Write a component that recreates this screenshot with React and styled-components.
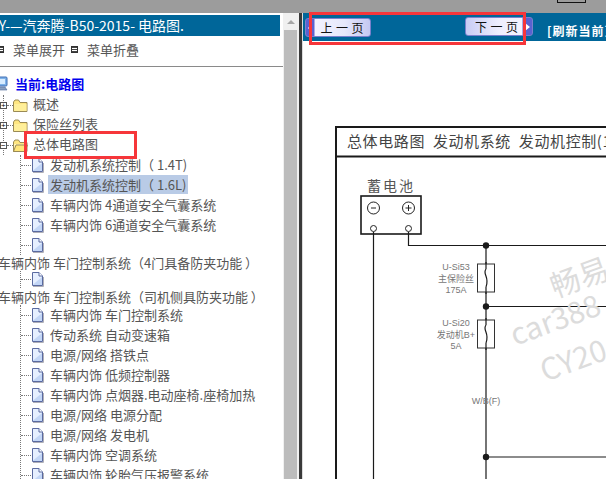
import styled, { createGlobalStyle } from 'styled-components';

const Global = createGlobalStyle`
  html, body { margin: 0; padding: 0; background: #fff; overflow: hidden; }
  body { font-family: "Noto Sans CJK SC", "Liberation Sans", sans-serif; }
`;

const Page = styled.div`
  width: 606px;
  height: 479px;
  display: flex;
  flex-direction: column;
  overflow: hidden;
  position: relative;
`;

const TopBar = styled.div`
  height: 13px;
  flex: none;
  background: #9c9c9c;
`;

const TopTab = styled.div`
  width: 27px;
  height: 2px;
  margin-left: 557px;
  background: #9c9c9c;
  border: solid #111;
  border-width: 0 1px 1px;
`;

const Frames = styled.div`
  flex: 1;
  display: flex;
  min-height: 0;
`;

const LeftPane = styled.div`
  width: 283px;
  flex: none;
  overflow: hidden;
  padding-top: 2px;
  background: #fff;
`;

const TitleBar = styled.div`
  width: 280px;
  height: 21px;
  background: #006699;
  color: #fff;
  font-size: 14px;
  line-height: 21px;
  white-space: nowrap;
  overflow: hidden;
  text-indent: -10px;
`;

const MenuRow = styled.div`
  height: 26px;
  padding-bottom: 4px;
  display: flex;
  align-items: center;
  margin-left: -3px;
  border-bottom: 1px solid #8a8a8a;
  font-size: 13px;
  color: #555;
`;

const MenuIcon = styled.span`
  width: 5px;
  height: 5px;
  border: 1px solid #333;
  margin-right: 9px;
  margin-left: ${p => p.$gap || 0}px;
  background: repeating-linear-gradient(#444 0 1px, #fff 1px 2px);
`;

const MenuLabel = styled.span`
  width: 53px;
  white-space: nowrap;
`;

const RootRow = styled.div`
  height: 20px;
  margin-top: 6px;
  margin-bottom: 2px;
  display: flex;
  align-items: center;
  margin-left: -7px;
  gap: 7px;
  color: #0000ee;
  font-size: 13px;
  font-weight: 700;
`;

const FolderList = styled.div`
  margin-left: 3px;
  border-left: 1px dotted #777;
`;

const FolderRow = styled.div`
  height: 20px;
  display: flex;
  align-items: center;
  font-size: 13px;
  color: #555;
  white-space: nowrap;
`;

const Toggle = styled.span`
  width: 5px;
  height: 5px;
  margin-left: -4px;
  flex: none;
  border: 1px solid #555;
  background: #fff;
  font: 8px/5px "Liberation Mono", monospace;
  color: #000;
  text-align: center;
`;

const Connector = styled.span`
  width: ${p => p.$w}px;
  flex: none;
  border-top: 1px dotted #777;
`;

const Leaves = styled.div`
  margin-left: 20px;
  border-left: 1px dotted #777;
`;

const Leaf = styled.div`
  height: ${p => p.$h || 20}px;
  display: flex;
  align-items: center;
  font-size: 13px;
  color: #555;
  white-space: nowrap;
`;

const FolderLabel = styled.span`
  margin-left: 5px;
  line-height: 18px;
  padding-bottom: 2px;
`;

const LeafLabel = styled.span`
  margin-left: 4px;
  margin-bottom: 1px;
  padding: 0 2px;
  line-height: 19px;
  background: ${p => (p.$selected ? '#b9cbe6' : 'transparent')};
`;

const Wrapped = styled.div`
  height: ${p => p.$h}px;
  padding-top: ${p => p.$pad || 0}px;
  line-height: ${p => p.$h}px;
  margin-left: -2px;
  font-size: 13px;
  color: #555;
  white-space: nowrap;
`;

const ScrollBar = styled.div`
  width: 16px;
  flex: none;
  display: flex;
  flex-direction: column;
  align-items: center;
  background: #f0f0f0;
`;

const ScrollArrow = styled.span`
  margin-top: 7px;
  width: 0;
  height: 0;
  border: 4px solid transparent;
  border-top: 0;
  border-bottom: 4px solid #a6a6a6;
`;

const ScrollThumb = styled.div`
  flex: 1;
  width: 13px;
  margin-top: 6px;
  margin-right: 1px;
  background: #bcbcbc;
`;

const Splitter = styled.div`
  width: 4px;
  flex: none;
  background: linear-gradient(90deg, #3a3a3a 0 3px, #dcdcdc 3px);
`;

const RightPane = styled.div`
  flex: 1;
  min-width: 0;
  display: flex;
  flex-direction: column;
  overflow: hidden;
`;

const Toolbar = styled.div`
  height: 28px;
  flex: none;
  display: flex;
  background: #006699;
  padding-left: 2px;
  white-space: nowrap;
`;

const PageButton = styled.div`
  height: 19px;
  width: ${p => p.$w}px;
  margin-top: ${p => p.$top}px;
  margin-left: ${p => p.$left || 0}px;
  flex: none;
  box-sizing: border-box;
  display: flex;
  align-items: center;
  justify-content: ${p => (p.$right ? 'flex-start' : 'flex-end')};
  padding: 0 ${p => (p.$right ? 0 : 3)}px 0 ${p => (p.$right ? 9 : 0)}px;
  border: 1px solid #7a80cc;
  border-radius: 3px;
  background: linear-gradient(90deg, #5a62d0 0 8px, #f3f3ff 9px, #e6e8fb 60%, #c4c8f2);
  ${p => p.$right && 'background: linear-gradient(90deg, #c8ccf4, #eeeefe 50%, #f3f3ff 56px, #5a62d0 57px);'}
  font: 12px/1 "Noto Sans CJK SC", sans-serif;
  letter-spacing: 3.5px;
  color: #111;
  position: relative;
`;

const ButtonArrow = styled.span`
  width: 0;
  height: 0;
  position: absolute;
  top: 5px;
  ${p => (p.$right ? 'right: 2px;' : 'left: 2px;')}
  border: 4px solid transparent;
  ${p => (p.$right ? 'border-right: 0; border-left: 5px solid #fff;' : 'border-left: 0; border-right: 4px solid #fff;')}
`;

const RefreshLink = styled.span`
  margin-left: 14px;
  margin-top: 9px;
  color: #fff;
  font-size: 12px;
  font-weight: 700;
  letter-spacing: 1px;
  line-height: 18px;
`;

const Sheet = styled.svg`
  display: block;
  flex: 1;
  min-height: 0;
  background: #fff;
`;

const Callout = styled.div`
  position: absolute;
  box-sizing: border-box;
  left: ${p => p.$x}px;
  top: ${p => p.$y}px;
  width: ${p => p.$w}px;
  height: ${p => p.$h}px;
  border: 3px solid #f6363a;
`;

const Computer = () => (
  <svg width="15" height="15" viewBox="0 0 15 15">
    <rect x="1" y="1" width="13" height="9" rx="1" fill="#7fb2e8" stroke="#3f6fb5" />
    <rect x="3" y="3" width="9" height="5" fill="#d7ecff" />
    <path d="M3 11h9l2 3H1z" fill="#8aa0bf" stroke="#4d6a99" strokeWidth=".6" />
  </svg>
);

const Folder = ({ open }) => (
  <svg width="15" height="13" viewBox="0 0 15 13" style={{ flex: 'none' }}>
    <path d="M.5 3V12.5H14V3.5H7L5.5 1H2Z" fill="#ffe680" stroke="#9a8a55" />
    <path d="M1 5h12.5v7H1z" fill={open ? '#fff6b8' : '#ffef9a'} />
    {open && <path d="M.5 12.5L3 6h11.5L12 12.5z" fill="#ffe67a" stroke="#9a8a55" />}
  </svg>
);

const Doc = () => (
  <svg width="13" height="15" viewBox="0 0 13 15" style={{ flex: 'none' }}>
    <path d="M1.5.5H8L11.5 4V13.5H1.5Z" fill="#e6efff" stroke="#5a6aa0" />
    <path d="M2 12.5L11 5V13H2z" fill="#c3d6f6" />
    <path d="M8 .5V4H11.5" fill="#fff" stroke="#5a6aa0" />
    <path d="M2 14.5H12.5V5" fill="none" stroke="#b0b0b8" />
  </svg>
);

const group1 = [
  ['发动机系统控制（ 1.4T)'],
  ['发动机系统控制（ 1.6L)', true],
  ['车辆内饰 4通道安全气囊系统'],
  ['车辆内饰 6通道安全气囊系统'],
  [''],
];

const group3 = [
  '车辆内饰 车门控制系统',
  '传动系统 自动变速箱',
  '电源/网络 搭铁点',
  '车辆内饰 低频控制器',
  '车辆内饰 点烟器.电动座椅.座椅加热',
  '电源/网络 电源分配',
  '电源/网络 发电机',
  '车辆内饰 空调系统',
  '车辆内饰 轮胎气压报警系统',
];

const wire = { stroke: '#1a1a1a', strokeWidth: 1.2, fill: 'none' };
const sans = '"Liberation Sans", "Noto Sans CJK SC", sans-serif';

const FuseLabel = ({ y, lines }) => (
  <g fontFamily={sans} fontSize="9" fill="#777" textAnchor="middle">
    {lines.map((t, i) => (
      <text key={t} x="456" y={y + i * 11.5}>{t}</text>
    ))}
  </g>
);

const Fuse = ({ y, h }) => (
  <g>
    <rect x="477.5" y={y} width="17" height={h} fill="#fff" stroke="#333" />
    <path d={`M486 ${y - 2}V${y + 5}M486 ${y + h - 5}V${y + h + 2}M486 ${y + 5}c-4 5 4 8 0 ${h - 10}`} {...wire} />
  </g>
);

const Dot = ({ y }) => <circle cx="486" cy={y} r="3.2" fill="#1a1a1a" />;

const Watermark = ({ x, y, size, children }) => (
  <text x={x} y={y} fontSize={size} fill="#dcdcdc" fontFamily={'"Noto Sans CJK SC", sans-serif'} transform={`rotate(-20 ${x} ${y})`}>
    {children}
  </text>
);

const Diagram = () => (
  <Sheet viewBox="303 41 303 438" width="303" height="438">
    <path d="M606 127H336V479M336 156.5H606" fill="none" stroke="#1a1a1a" strokeWidth="2" />
    <text x="347" y="147" fontSize="15" fill="#444" letterSpacing=".6" fontFamily={'"Noto Sans CJK SC", sans-serif'} xmlSpace="preserve">总体电路图  发动机系统  发动机控制(1.6L)</text>
    <text x="367" y="191" fontSize="14" fill="#555" letterSpacing="2" fontFamily={'"Noto Sans CJK SC", sans-serif'}>蓄电池</text>

    <rect x="361" y="196" width="60" height="38" fill="#fff" stroke="#1a1a1a" strokeWidth="1.6" />
    <circle cx="373.5" cy="208" r="6" fill="none" stroke="#222" />
    <path d="M371 208h5" stroke="#222" />
    <circle cx="408.5" cy="208" r="6" fill="none" stroke="#222" />
    <path d="M405.5 208h6M408.5 205v6" stroke="#222" />
    <circle cx="373.5" cy="228.5" r="3" fill="#fff" stroke="#222" />
    <circle cx="408.5" cy="228.5" r="3" fill="#fff" stroke="#222" />

    <path d="M373.5 232V479M408.5 232V245.5H606M486 245.5V479M486 306.5H606M486 457H606" {...wire} />
    <Dot y={245.5} />
    <Dot y={306.5} />
    <Dot y={457} />

    <Fuse y={264} h={28} />
    <Fuse y={320} h={28} />
    <FuseLabel y={270} lines={['U-Si53', '主保险丝', '175A']} />
    <FuseLabel y={326} lines={['U-Si20', '发动机B+', '5A']} />

    <text x="486" y="404" textAnchor="middle" fontFamily={sans} fontSize="9" fill="#777">W/B(F)</text>

    <Watermark x={555} y={298} size={30}>畅易</Watermark>
    <Watermark x={515} y={346} size={30}>car388</Watermark>
    <Watermark x={545} y={382} size={30}>CY20</Watermark>
  </Sheet>
);

export default function App() {
  return (
    <Page>
      <Global />
      <TopBar>
        <TopTab />
      </TopBar>
      <Frames>
        <LeftPane>
          <TitleBar>CY-—汽奔腾-B50-2015- 电路图.</TitleBar>
          <MenuRow>
            <MenuIcon />
            <MenuLabel>菜单展开</MenuLabel>
            <MenuIcon $gap={5} />
            <MenuLabel>菜单折叠</MenuLabel>
          </MenuRow>
          <RootRow>
            <Computer />
            <span>当前:电路图</span>
          </RootRow>
          <FolderList>
            {['概述', '保险丝列表', '总体电路图'].map((name, i) => (
              <FolderRow key={name}>
                <Toggle>{i === 2 ? '−' : '+'}</Toggle>
                <Connector $w={6} />
                <Folder open={i === 2} />
                <FolderLabel>{name}</FolderLabel>
              </FolderRow>
            ))}
          </FolderList>
          <Leaves>
            {group1.map(([label, selected], i) => (
              <Leaf key={i}>
                <Connector $w={10} />
                <Doc />
                <LeafLabel $selected={selected}>{label}</LeafLabel>
              </Leaf>
            ))}
          </Leaves>
          <Wrapped $h={16}>车辆内饰 车门控制系统（4门具备防夹功能 ）</Wrapped>
          <Leaves>
            <Leaf $h={17}>
              <Connector $w={10} />
              <Doc />
            </Leaf>
          </Leaves>
          <Wrapped $h={16} $pad={1}>车辆内饰 车门控制系统（司机侧具防夹功能 ）</Wrapped>
          <Leaves>
            {group3.map(label => (
              <Leaf key={label}>
                <Connector $w={10} />
                <Doc />
                <LeafLabel>{label}</LeafLabel>
              </Leaf>
            ))}
          </Leaves>
        </LeftPane>
        <ScrollBar>
          <ScrollArrow />
          <ScrollThumb />
        </ScrollBar>
        <Splitter />
        <RightPane>
          <Toolbar>
            <PageButton $w={66} $top={5}>
              <ButtonArrow />
              上一页
            </PageButton>
            <PageButton $w={68} $top={4} $left={94} $right>
              下一页
              <ButtonArrow $right />
            </PageButton>
            <RefreshLink>[刷新当前页面]</RefreshLink>
          </Toolbar>
          <Diagram />
        </RightPane>
      </Frames>
      <Callout $x={24} $y={131} $w={113} $h={28} />
      <Callout $x={309} $y={12} $w={217} $h={33} />
    </Page>
  );
}
